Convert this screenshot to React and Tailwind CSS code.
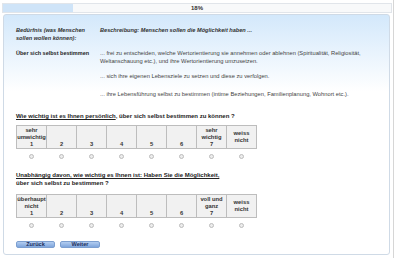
const levels1 = [
  ["sehr", "umwichtig", "1"],
  ["", "", "2"],
  ["", "", "3"],
  ["", "", "4"],
  ["", "", "5"],
  ["", "", "6"],
  ["sehr", "wichtig", "7"],
];

const levels2 = [
  ["überhaupt", "nicht", "1"],
  ["", "", "2"],
  ["", "", "3"],
  ["", "", "4"],
  ["", "", "5"],
  ["", "", "6"],
  ["voll und", "ganz", "7"],
];

const Scale = ({ levels }) => (
  <div>
    <table className="border-collapse">
      <tbody>
        <tr>
          {levels.map((l, i) => (
            <td
              key={i}
              className="w-[30px] h-[23px] border border-[#bdbdbd] bg-[#f1f1f1] p-0 text-center align-bottom text-[5.8px] leading-[7px] font-bold text-[#333]"
            >
              <div>{l[0]}</div>
              <div>{l[1]}</div>
              <div>{l[2]}</div>
            </td>
          ))}
          <td className="w-[30px] h-[23px] border border-[#bdbdbd] bg-[#f1f1f1] p-0 text-center align-middle text-[5.8px] leading-[7px] font-bold text-[#333]">
            <div>weiss</div>
            <div>nicht</div>
          </td>
        </tr>
      </tbody>
    </table>
    <div className="flex h-[14px] items-center">
      {[...Array(8)].map((_, i) => (
        <div key={i} className="w-[30px] flex justify-center">
          <div className="w-[5px] h-[5px] rounded-full border border-[#bcbcbc] bg-[#ececec]"></div>
        </div>
      ))}
    </div>
  </div>
);

const App = () => {
  return (
    <div className="w-[400px] h-[258px] bg-white overflow-hidden font-['Liberation_Sans',sans-serif] text-[#333]">
      <div className="w-[394px] h-[258px] border-r border-[#d6d6d6] pt-[3px]">

        {/* progress */}
        <div className="ml-[2px] w-[390px] h-[10px] border border-[#e1e5ea] bg-[#f8f9fa] relative">
          <div className="w-[70px] h-full bg-[#cfe4f8]"></div>
          <div className="absolute inset-0 flex items-center justify-center text-[6px] font-bold text-[#333]">
            18%
          </div>
        </div>

        {/* panel */}
        <div className="ml-[3px] mt-[1px] w-[387px] h-[241px] border border-[#cfdae6] rounded-[3px] bg-[linear-gradient(#d3e8fb,#ffffff_32%)] px-[12px] pt-[11px]">

          {/* heading */}
          <div className="flex text-[5.6px] leading-[8px] font-bold italic text-[#333]">
            <div className="w-[84px]">
              Bedürfnis (was Menschen
              <br />
              sollen wollen können):
            </div>
            <div>Beschreibung: Menschen sollen die Möglichkeit haben ...</div>
          </div>

          {/* need */}
          <div className="flex mt-[7px] text-[5.75px] leading-[8px]">
            <div className="w-[84px] font-bold text-[5.5px] text-[#222]">Über sich selbst bestimmen</div>
            <div className="flex-1 text-[#444]">
              <p>
                ... frei zu entscheiden, welche Wertorientierung sie annehmen oder ablehnen (Spiritualität, Religiosität,
                <br />
                Weltanschauung etc.), und ihre Wertorientierung umzusetzen.
              </p>
              <p className="mt-[7px]">... sich ihre eigenen Lebensziele zu setzen und diese zu verfolgen.</p>
              <p className="mt-[10px]">
                ... ihre Lebensführung selbst zu bestimmen (intime Beziehungen, Familienplanung, Wohnort etc.).
              </p>
            </div>
          </div>

          {/* question 1 */}
          <p className="mt-[14px] text-[6px] leading-[8px] font-bold text-[#222]">
            <span className="underline">Wie wichtig ist es Ihnen persönlich</span>, über sich selbst bestimmen zu können ?
          </p>
          <div className="mt-[5px]">
            <Scale levels={levels1} />
          </div>

          {/* question 2 */}
          <p className="mt-[8px] text-[6px] leading-[8px] font-bold text-[#222]">
            <span className="underline">Unabhängig davon, wie wichtig es Ihnen ist: Haben Sie die Möglichkeit,</span>
            <br />
            über sich selbst zu bestimmen ?
          </p>
          <div className="mt-[7px]">
            <Scale levels={levels2} />
          </div>

          {/* buttons */}
          <div className="flex gap-[5px] mt-[9px]">
            <button className="w-[39px] h-[7px] rounded-[2px] border border-[#7c9fd0] bg-[linear-gradient(#b3cdf0,#7ea5dc)] text-[5.6px] leading-[5px] font-bold text-[#1d2f5c]">
              Zurück
            </button>
            <button className="w-[40px] h-[7px] rounded-[2px] border border-[#7c9fd0] bg-[linear-gradient(#b3cdf0,#7ea5dc)] text-[5.6px] leading-[5px] font-bold text-[#1d2f5c]">
              Weiter
            </button>
          </div>
        </div>
      </div>
    </div>
  );
};

export default App;
